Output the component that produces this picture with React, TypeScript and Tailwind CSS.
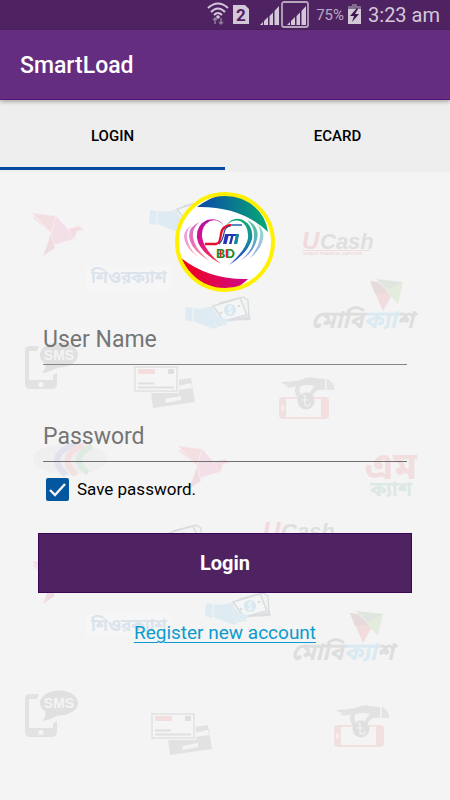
import { useState } from "react";

const bangla = '"Noto Sans Bengali", "Noto Sans", sans-serif';

function Bird() {
  return (
    <g stroke="#f7eef1" strokeWidth="0.6" strokeLinejoin="round">
      <path d="M0 0 L24 3 L19 20 Z" fill="#f3dfe1" />
      <path d="M2 3 L1 5 L19 20 Z" fill="#f3dfe1" />
      <path d="M24 3 L44 25 L42 26 L22 32 L19 20 Z" fill="#f3dfe8" />
      <path d="M36 16 L47 13 L52 17 L45 18 L42 26 Z" fill="#f3dce0" />
      <path d="M19 20 L22 32 L23 35 L11 43 Z" fill="#eedcde" />
    </g>
  );
}

function MoneyHand() {
  return (
    <g>
      <path d="M33 8 L60 2 L66 23 L40 24 Z" fill="#dcdfe0" />
      <path d="M35 6 L58 0 L63 3 L64 20 L42 24 Z" fill="#f1f3f3" stroke="#dadddf" strokeWidth="1.4" />
      <path d="M28 9 L55 1 L62 18 L39 24 Z" fill="#f4f5f5" stroke="#dadddf" strokeWidth="1.6" strokeLinejoin="round" />
      <circle cx="45" cy="13" r="6" fill="#d7e7f0" />
      <text x="42" y="17" fontSize="10" fontWeight="700" fill="#f4f5f5" fontFamily="Roboto, sans-serif">$</text>
      <circle cx="54" cy="9" r="1.3" fill="#dadddf" />
      <circle cx="36" cy="16" r="1.3" fill="#dadddf" />
      <path d="M1 10 L8 11 L7 25 L0 23 Z" fill="#dfebf2" />
      <path d="M9 11 Q18 13 27 9 Q29 15 33 19 L44 23 Q38 27 43 27 Q37 29 34 29 Q30 33 26 31 Q17 27 8 24 Z" fill="#dfebf2" />
      <path d="M30 27 L34 30 M34 25 L39 28" stroke="#eef3f6" strokeWidth="0.7" />
    </g>
  );
}

function ShiorCash() {
  return (
    <g>
      <rect x="-5" y="-4" width="85" height="24" fill="#f6f6f6" />
      <text x="0" y="13" fontSize="17" fontWeight="700" fill="#dbe3ed" fontFamily={bangla}>শিওরক্যাশ</text>
    </g>
  );
}

function UCash() {
  return (
    <g fontFamily='"Liberation Sans", Arial, sans-serif' fontWeight="700" fontStyle="italic">
      <text x="-1" y="16" fontSize="24" fill="#f2d9db">U</text>
      <text x="17" y="16" fontSize="22" fill="#dfdfdf">Cash</text>
      <path d="M0 17.5 H67" stroke="#f2dcdd" strokeWidth="1" />
      <text x="0" y="22" fontSize="4" fill="#f0d9da">MOBILE FINANCIAL SERVICES</text>
    </g>
  );
}

function MobiCash() {
  return (
    <g>
      <path d="M58 2 L74 11 L80 16 L71 32 Z" fill="#f2dcdd" />
      <path d="M58 2 L66 3 L78 14 L63 15 Z" fill="#e6dada" />
      <path d="M64 0 L91 3 L79 14 Z" fill="#dfe5df" />
      <path d="M91 3 L86 25 L74 12 Z" fill="#e4eddd" />
      <text x="-1" y="49" fontSize="24" fontWeight="700" fontStyle="italic" fill="#dedede" fontFamily={bangla}>
        মোবি<tspan fill="#dbeaf2">ক্যা</tspan>শ
      </text>
    </g>
  );
}

function SmsPhone() {
  return (
    <g>
      <path d="M14 4 H5 Q0 4 0 9 V42 Q0 47 5 47 H27 Q32 47 32 42 V31 L28 33 V38 H4 V9 H12 Z" fill="#e2e2e2" />
      <circle cx="16" cy="42.5" r="2.6" fill="#f4f4f4" />
      <ellipse cx="34" cy="13" rx="19" ry="12.5" fill="#e0e0e0" />
      <path d="M20 20 Q22 26 17 31 Q29 29 35 24 Z" fill="#e0e0e0" />
      <text x="34" y="18" fontSize="14" fontWeight="700" fill="#f4f4f4" textAnchor="middle" fontFamily='"Liberation Sans", Arial, sans-serif'>SMS</text>
    </g>
  );
}

function Cards() {
  return (
    <g>
      <path d="M16 18 L57 12 L61 36 L19 42 Z" fill="#e2e2e2" />
      <path d="M44 20 L57 17 L58 22 L44 24 Z" fill="#f4f4f4" />
      <path d="M31 33 L47 30 V34 L32 37 Z" fill="#f4f4f4" />
      <rect x="-1" y="-1" width="46" height="28" fill="#f4f4f4" />
      <rect x="1" y="1" width="42" height="24" fill="#f5f5f5" stroke="#e1e1e1" strokeWidth="1.5" />
      <rect x="4" y="3" width="17" height="5" rx="1" fill="#f1dedd" />
      <rect x="34" y="3" width="6" height="5" rx="1" fill="#dedede" />
      <path d="M4 17.5 H20 M4 21.5 H40" stroke="#e0e0e0" strokeWidth="2" />
    </g>
  );
}

function PhoneCoin() {
  return (
    <g>
      <rect x="1" y="21" width="48" height="20" rx="3" fill="none" stroke="#f2e2e2" strokeWidth="1.8" />
      <path d="M4 20 H7 V42 H4 Q0 42 0 38 V24 Q0 20 4 20 Z M42 20 H46 Q50 20 50 24 V38 Q50 42 46 42 H42 Z" fill="#f2e0e0" />
      <rect x="2.5" y="28" width="2" height="6" rx="1" fill="#f6f2f2" />
      <path d="M2 5 Q12 5 21 3 Q30 -1 35 1 L46 2 V13 Q40 12 37 14 Q34 17 33 20 L30 19 Q31 14 36 9 Q28 7 22 9 Q19 11 22 19 L19 21 Q14 14 17 9 Q10 12 6 9 L10 8 Q5 8 2 5 Z" fill="#e2e2e2" />
      <path d="M47.5 2 V13 H55.500 Q55 6 49 2 Z" fill="#e4e4e4" />
      <circle cx="27" cy="24" r="8.5" fill="#dfdfdf" />
      <path d="M24 18 Q26 18 26 20 V28 Q30 31 31 26 M23 23 H29" stroke="#f4f4f4" strokeWidth="1.2" fill="none" strokeLinecap="round" />
    </g>
  );
}

function Backdrop() {
  return (
    <svg
      aria-hidden="true"
      className="pointer-events-none absolute inset-0 h-full w-full"
      viewBox="0 172 450 628"
      preserveAspectRatio="xMidYMin slice"
    >
      <g transform="translate(32 213)"><Bird /></g>
      <g transform="translate(178 446)"><Bird /></g>
      <g transform="translate(32 561)"><Bird /></g>
      <g transform="translate(149 200)"><MoneyHand /></g>
      <g transform="translate(185 297)"><MoneyHand /></g>
      <g transform="translate(138 525)"><MoneyHand /></g>
      <g transform="translate(205 593)"><MoneyHand /></g>
      <g transform="translate(91 270)"><ShiorCash /></g>
      <g transform="translate(91 618)"><ShiorCash /></g>
      <g transform="translate(303 233)"><UCash /></g>
      <g transform="translate(264 523)"><UCash /></g>
      <g transform="translate(312 279)"><MobiCash /></g>
      <g transform="translate(292 611)"><MobiCash /></g>
      <g transform="translate(25 342)"><SmsPhone /></g>
      <g transform="translate(25 690)"><SmsPhone /></g>
      <g transform="translate(134 366)"><Cards /></g>
      <g transform="translate(151 713)"><Cards /></g>
      <g transform="translate(279 377)"><PhoneCoin /></g>
      <g transform="translate(334 705)"><PhoneCoin /></g>
      <g>
        <ellipse cx="70" cy="459" rx="37" ry="16" fill="#efefef" />
        <g fill="none" strokeWidth="6">
          <path d="M77 444 Q44 454 66 475" stroke="#e1e2ed" />
          <path d="M84 445 Q56 456 76 475" stroke="#f4e0e0" />
          <path d="M92 446 Q68 458 88 473" stroke="#deebe2" />
        </g>
      </g>
      <g fontFamily={bangla} fontWeight="700" textAnchor="middle">
        <text x="391" y="479" fontSize="38" fill="#f2dedf">এম</text>
        <text x="391" y="496" fontSize="20" fill="#dde8e3">ক্যাশ</text>
      </g>
    </svg>
  );
}

function Logo() {
  return (
    <svg role="img" aria-label="SM BD" className="size-[100px]" viewBox="0 0 100 100">
      <defs>
        <linearGradient id="top" x1="0" x2="1"><stop offset="0.1" stopColor="#0b50a4" /><stop offset="1" stopColor="#08a876" /></linearGradient>
        <linearGradient id="bottom" x1="0" x2="1"><stop offset="0" stopColor="#f00018" /><stop offset="1" stopColor="#cf0a88" /></linearGradient>
        <linearGradient id="left" x1="0" y1="0" x2="0" y2="1"><stop offset="0" stopColor="#b512a8" /><stop offset="0.5" stopColor="#d9108c" /><stop offset="1" stopColor="#f0404c" /></linearGradient>
        <linearGradient id="right" x1="0" y1="0" x2="0" y2="1"><stop offset="0" stopColor="#0fae6c" /><stop offset="0.5" stopColor="#168aa4" /><stop offset="1" stopColor="#2637c8" /></linearGradient>
        <clipPath id="disc"><circle cx="50" cy="50" r="47" /></clipPath>
      </defs>
      <circle cx="50" cy="50" r="48" fill="#fff" />
      <g clipPath="url(#disc)">
        <path d="M22 15 Q55 -10 80 15 Q91 25 93 40 Q66 14 22 15 Z" fill="url(#top)" />
        <path d="M6 66 Q34 88 73 87 Q55 105 34 97 Q12 88 6 66 Z" fill="url(#bottom)" />
      </g>
      <g fill="url(#left)">
        <path d="M49 34 Q43 26 35 29 Q26 34 27 45 Q29 58 46 72 Q24 60 22 46 Q21 33 32 28 Q44 25 49 34 Z" />
        <path d="M25 30 Q17 35 18 45 Q20 58 35 69 Q15 58 14 44 Q14 34 25 30 Z" opacity=".6" />
        <path d="M17 33 Q11 38 12 46 Q14 57 24 66 Q9 55 9 44 Q10 37 17 33 Z" opacity=".4" />
      </g>
      <g fill="url(#right)">
        <path d="M51 34 Q57 24 68 28 Q79 34 77 47 Q73 61 54 73 Q71 58 73 46 Q74 33 65 29 Q57 27 51 34 Z" />
        <path d="M72 28 Q85 34 82 47 Q79 60 65 69 Q78 59 79 46 Q80 35 72 28 Z" opacity=".7" />
        <path d="M82 32 Q90 38 88 47 Q86 57 75 66 Q84 55 85 45 Q86 37 82 32 Z" opacity=".45" />
      </g>
      <path d="M30 52 H41 Q45 52 46 42 Q47 34 56 33" fill="none" stroke="#e8102b" strokeWidth="2.4" />
      <path d="M44 52 Q48 48 49 41 Q50 35 55 34" fill="none" stroke="#203ba3" strokeWidth="1.2" />
      <path d="M56 33 H67" stroke="#1854ad" strokeWidth="1.4" />
      <path d="M48 52 L50 42 H64 L62 52 H59 L61 44 H58.500 L56.500 52 H54 L56 44 H53.500 L51.500 52 Z" fill="#2436b5" />
      <path d="M59 52 L61 42 H64 L62 52 Z" fill="#138b93" />
      <text x="41" y="66" fill="#208c20" fontFamily='"Liberation Sans", Arial, sans-serif' fontSize="13" fontWeight="700">BD</text>
      <path d="M51.5 57.500 V65.500 M45.500 58 V65" stroke="#ef1527" strokeWidth="1.6" />
      <circle cx="50" cy="50" r="48" fill="none" stroke="#fff000" strokeWidth="4" />
    </svg>
  );
}

function Signal() {
  return <path d="M0 20 L3 17 V20 Z M4 16 L8 12 V20 H4 Z M9.5 11 L13 7.5 V20 H9.5 Z M14.5 6 L19 1 V20 H14.5 Z" />;
}

function StatusBar() {
  return (
    <header className="flex h-[30px] items-center justify-end bg-[#4f2262] pr-[10px] text-[#d3c8d8]">
      <svg aria-hidden="true" className="h-[30px] w-[104px]" viewBox="206 0 104 30" fill="currentColor">
        <g fill="none" stroke="currentColor" strokeWidth="2">
          <path d="M208 8 Q218 -1 228 8" />
          <path d="M211 12 Q218 5 225 12" />
          <path d="M214 15 Q218 11 222 15" />
        </g>
        <circle cx="218" cy="17" r="1.8" />
        <path d="M215 18 V24 M213 20 L215 18 L217 20 M221 18 V24 M219 22 L221 24 L223 22" fill="none" stroke="#927c9b" strokeWidth="1.5" />
        <path d="M233 5 H245 L249 9 V24 H233 Z" />
        <text x="241" y="21" textAnchor="middle" fontSize="17" fontWeight="700" fill="#4f2262" fontFamily="Roboto, sans-serif">2</text>
        <g transform="translate(260 5)"><Signal /></g>
        <rect x="282" y="2" width="26" height="25" rx="2" fill="none" stroke="#b5a6bb" strokeWidth="1.8" />
        <g transform="translate(287 5)"><Signal /></g>
      </svg>
      <span className="ml-[6px] font-[Roboto,sans-serif] text-[15px] leading-[30px] text-[#b9abc0]">75%</span>
      <svg aria-hidden="true" className="ml-[4px] h-[30px] w-[13px]" viewBox="0 0 13 30">
        <path d="M4 4 H9 V6 H13 V10 H0 V6 H4 Z" fill="#846c90" />
        <path d="M0 9 H13 V24 H0 Z" fill="#d3c8d8" />
        <path d="M9 8 L2 16 H6 L4 22 L11 14 H7 L10 9 Z" fill="#3d174c" />
      </svg>
      <time className="ml-[7px] font-[Roboto,sans-serif] text-[20px] leading-[30px]">3:23 am</time>
    </header>
  );
}

export default function App() {
  const [saved, setSaved] = useState(true);
  const [tab, setTab] = useState("LOGIN");
  return (
    <div className="flex min-h-screen flex-col bg-[#f4f4f4] font-[Roboto,sans-serif]">
      <StatusBar />
      <div className="relative flex h-[70px] items-center border-b border-[#541576] bg-[#652d80] px-5 pt-[2px] shadow-[0_2px_4px_rgba(0,0,0,0.28)]">
        <h1 className="text-[23px] leading-7 font-medium text-white">SmartLoad</h1>
      </div>
      <div role="tablist" className="grid h-[72px] grid-cols-2 bg-[#eeeeee] pb-[2px]">
        {["LOGIN", "ECARD"].map((name) => (
          <button
            key={name}
            type="button"
            role="tab"
            aria-selected={tab === name}
            onClick={() => setTab(name)}
            className={`border-b-[3px] pt-1 text-[15px] leading-5 font-medium text-black ${tab === name ? "border-[#0748a0]" : "border-transparent"}`}
          >
            {name}
          </button>
        ))}
      </div>
      <main className="relative flex-1 overflow-hidden">
        <Backdrop />
        <form className="relative flex flex-col px-[38px] pt-5" onSubmit={(e) => e.preventDefault()}>
          <div className="flex justify-center">
            <Logo />
          </div>
          <div className="mt-[22px] flex flex-col gap-[46px] px-[5px]">
            <input
              type="text"
              aria-label="User Name"
              placeholder="User Name"
              className="h-[51px] w-full border-b border-[#858585] bg-transparent text-[23px] text-black outline-none placeholder:text-[#757575]"
            />
            <input
              type="password"
              aria-label="Password"
              placeholder="Password"
              className="h-[51px] w-full border-b border-[#707070] bg-transparent text-[23px] text-black outline-none placeholder:text-[#757575]"
            />
          </div>
          <label className="mt-[15px] flex items-center gap-2 pl-2 text-[17px] leading-6 text-black">
            <span className="grid size-[23px]">
              <input
                type="checkbox"
                checked={saved}
                onChange={(e) => setSaved(e.target.checked)}
                className="col-start-1 row-start-1 size-[23px] appearance-none rounded-[2px] border-2 border-[#03579f] checked:bg-[#03579f]"
              />
              {saved && (
                <svg aria-hidden="true" className="pointer-events-none col-start-1 row-start-1 size-[23px]" viewBox="0 0 23 23">
                  <path d="M4 12 L9 17 L19 6" fill="none" stroke="#f4f4f4" strokeWidth="2.4" />
                </svg>
              )}
            </span>
            Save password.
          </label>
          <button type="submit" className="mt-8 h-[60px] w-full border border-[#3b0657] bg-[#4f2262] text-[20px] font-bold text-white">
            Login
          </button>
          <div className="mt-[27px] flex justify-center">
            <a href="#register" className="text-[19px] leading-[26px] text-[#0c9bce] underline decoration-1 underline-offset-3">
              Register new account
            </a>
          </div>
        </form>
      </main>
    </div>
  );
}
